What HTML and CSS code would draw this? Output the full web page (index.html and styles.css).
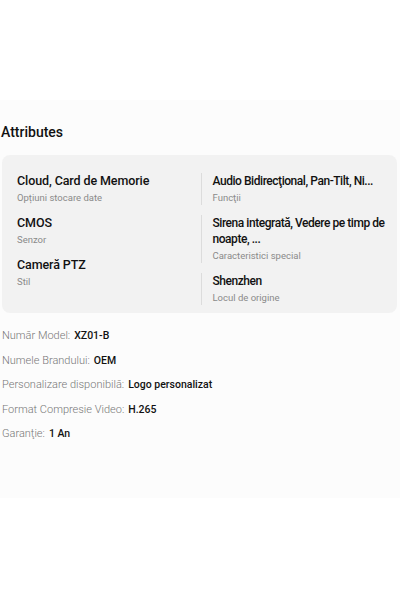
FILE: index.html
```html
<!DOCTYPE html>
<html>
<head>
    <title>Attributes</title>
    <meta charset="utf-8" />
    <meta name="viewport" content="width=device-width, initial-scale=1.0">
    <link rel="stylesheet" href="styles.css">
</head>
<body>
    <div class="top-space"></div>
    <div class="attr-section">
        <h2 class="attr-title">Attributes</h2>
        <div class="attr-card">
            <div class="attr-col">
                <div class="attr-item">
                    <div class="attr-value">Cloud, Card de Memorie</div>
                    <div class="attr-label">Opțiuni stocare date</div>
                </div>
                <div class="attr-item">
                    <div class="attr-value">CMOS</div>
                    <div class="attr-label">Senzor</div>
                </div>
                <div class="attr-item">
                    <div class="attr-value">Cameră PTZ</div>
                    <div class="attr-label">Stil</div>
                </div>
            </div>
            <div class="attr-col attr-col-right">
                <div class="attr-item">
                    <div class="attr-value nowrap">Audio Bidirecţional, Pan-Tilt, Ni...</div>
                    <div class="attr-label">Funcţii</div>
                </div>
                <div class="attr-item">
                    <div class="attr-value nowrap">Sirena integrată, Vedere pe timp de<br>noapte, ...</div>
                    <div class="attr-label">Caracteristici special</div>
                </div>
                <div class="attr-item">
                    <div class="attr-value">Shenzhen</div>
                    <div class="attr-label">Locul de origine</div>
                </div>
            </div>
        </div>
        <div class="spec-list">
            <div class="spec-row"><span class="spec-name">Număr Model:</span><span class="spec-val">XZ01-B</span></div>
            <div class="spec-row"><span class="spec-name">Numele Brandului:</span><span class="spec-val">OEM</span></div>
            <div class="spec-row"><span class="spec-name">Personalizare disponibilă:</span><span class="spec-val">Logo personalizat</span></div>
            <div class="spec-row"><span class="spec-name">Format Compresie Video:</span><span class="spec-val">H.265</span></div>
            <div class="spec-row"><span class="spec-name">Garanţie:</span><span class="spec-val">1 An</span></div>
        </div>
    </div>
</body>
</html>
```

FILE: styles.css
```css
body {
    margin: 0;
    background: #fff;
    font-family: Roboto, "Noto Sans", sans-serif;
    color: #111;
}

.top-space {
    height: 100px;
}

.attr-section {
    background: #fcfcfc;
    height: 398px;
    padding: 22px 0 0;
    box-sizing: border-box;
}

.attr-title {
    margin: 0 0 13px 1px;
    font-size: 14px;
    line-height: 20px;
    font-weight: 500;
}

.attr-card {
    display: grid;
    grid-template-columns: minmax(0, 1fr) minmax(0, 1fr);
    margin: 0 3px 0 2px;
    padding: 18px 15px 8px;
    background: #f2f2f2;
    border-radius: 8px;
}

.attr-col {
    display: flex;
    flex-direction: column;
    gap: 10px;
    min-width: 0;
}

.attr-col-right {
    padding-left: 1px;
}

.attr-col-right .attr-item {
    border-left: 1px solid #dcdcdc;
    padding-left: 11px;
}

.attr-value {
    font-size: 12.5px;
    line-height: 16px;
    font-weight: 500;
    letter-spacing: -0.1px;
}

.attr-col-right .attr-value {
    font-size: 12px;
    letter-spacing: -0.45px;
}

.nowrap {
    white-space: nowrap;
}

.attr-label {
    margin-top: 2px;
    font-size: 9.5px;
    line-height: 14px;
    color: #8a8a8a;
}

.spec-list {
    margin: 11px 0 0 2px;
}

.spec-row {
    font-size: 11px;
    line-height: 24.5px;
}

.spec-name {
    color: #777;
    font-weight: 300;
    margin-right: 4px;
}

.spec-val {
    font-size: 10.5px;
    font-weight: 500;
    color: #111;
}
```
